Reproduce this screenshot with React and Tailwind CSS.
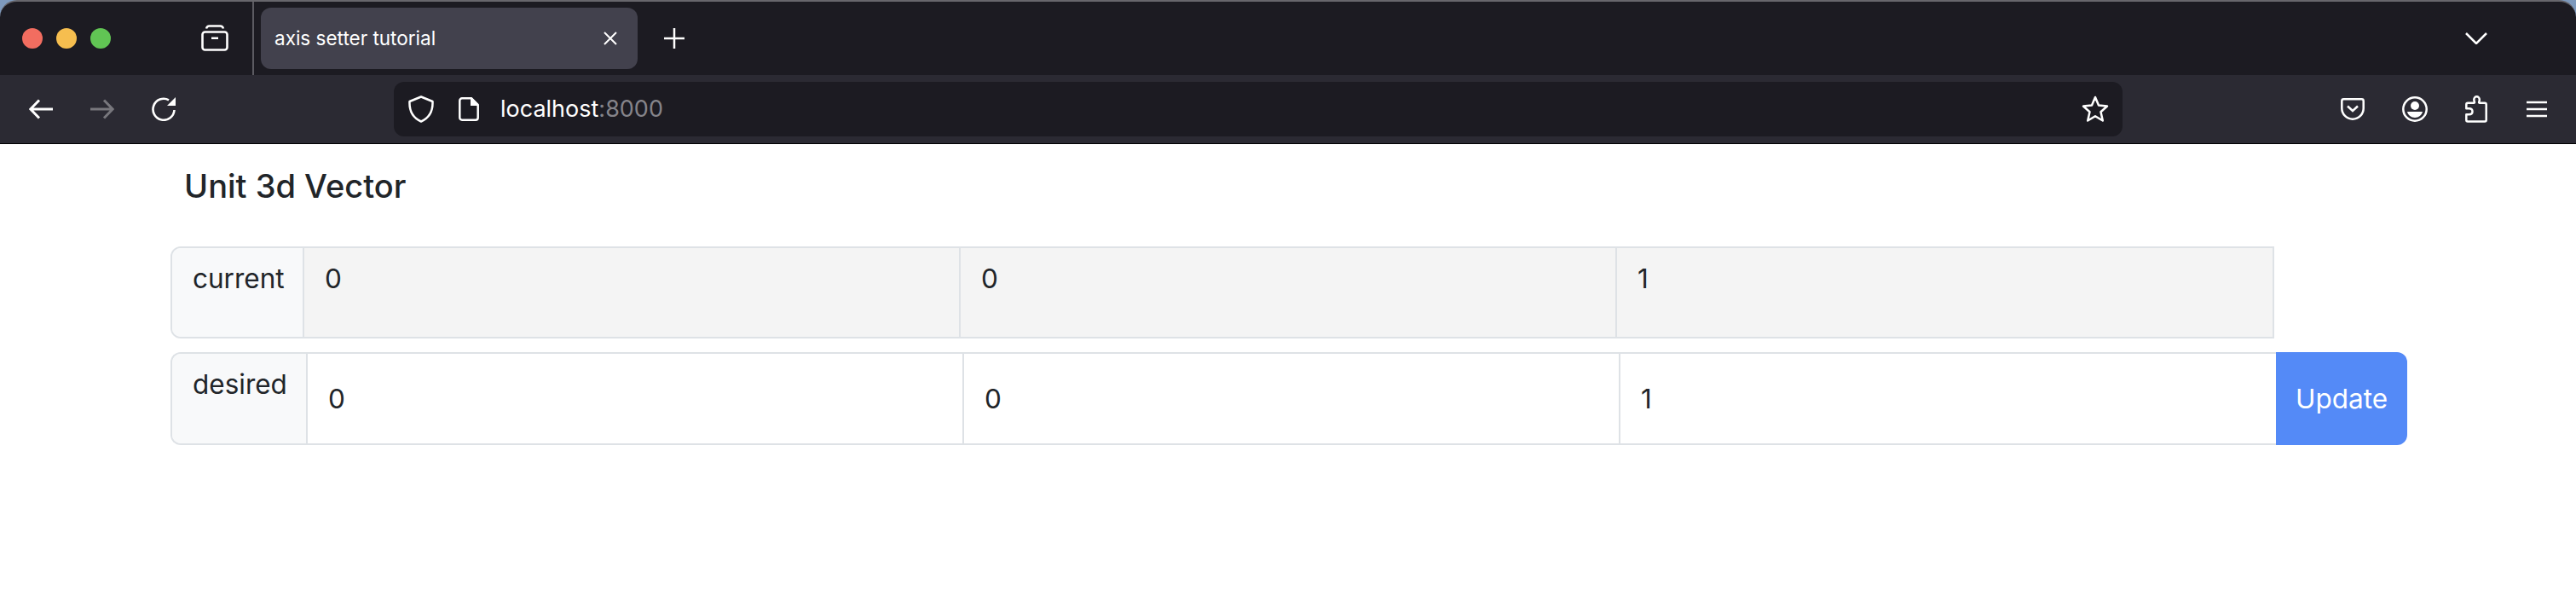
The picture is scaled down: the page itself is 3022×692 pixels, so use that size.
function ViewIcon() {
  return (
    <svg width="32" height="32" viewBox="0 0 32 32" fill="none" stroke="white" strokeWidth="2.6" className="ml-[106px] shrink-0">
      <rect x="1.5" y="8.5" width="29" height="21" rx="3" />
      <path d="M6 4.5c.6-2 1.6-3 3.5-3h13c1.900 0 2.900 1 3.500 3" />
      <rect x="12" y="14.500" width="8" height="2.500" fill="white" stroke="none" />
    </svg>
  )
}

function Back({ dim }) {
  return (
    <svg width="28" height="24" viewBox="0 0 28 24" fill="none" stroke={dim ? '#78777d' : 'white'} strokeWidth="3" className={dim ? 'ml-[44px] shrink-0 rotate-180' : 'shrink-0'}>
      <path d="M28 12H2M12 1.500 1.800 12 12 22.500" />
    </svg>
  )
}

function Reload() {
  return (
    <svg width="28" height="28" viewBox="0 0 28 28" fill="none" className="ml-[44px] shrink-0">
      <path d="M26.500 15A12.500 12.500 0 1 1 20 3.300" stroke="white" strokeWidth="2.600" />
      <path d="M28 0v10H18z" fill="white" />
    </svg>
  )
}

function Shield() {
  return (
    <svg width="30" height="32" viewBox="0 0 30 32" fill="none" stroke="white" strokeWidth="2.500" className="ml-[17px] shrink-0">
      <path d="M15 1.500 28.500 7c.5 11-3.500 19-13.500 23.500C5 26 1 18 1.500 7z" strokeLinejoin="round" />
    </svg>
  )
}

function FileIcon() {
  return (
    <svg width="24" height="28" viewBox="0 0 24 28" fill="none" className="ml-[29px] shrink-0">
      <path d="M4 1.300h11L22.700 9v15c0 1.500-1.200 2.700-2.700 2.700H4A2.700 2.700 0 0 1 1.300 24V4A2.700 2.700 0 0 1 4 1.300z" stroke="white" strokeWidth="2.500" />
      <path d="M14 1h2l7 7v2h-9z" fill="white" />
    </svg>
  )
}

function Star() {
  return (
    <svg width="32" height="32" viewBox="0 0 32 32" fill="none" stroke="white" strokeWidth="2.500" strokeLinejoin="round" className="ml-auto mr-[16px] shrink-0">
      <path d="M16 2l4 9.500 10 1-7.500 6.800 2.300 10.200-8.800-5.300-8.800 5.300 2.300-10.200L2 12.500l10-1z" />
    </svg>
  )
}

function Pocket() {
  return (
    <svg width="28" height="26" viewBox="0 0 28 26" fill="none" stroke="white" strokeWidth="2.500" className="ml-[256px] shrink-0">
      <path d="M3.500 1.300h21c1.300 0 2.200.9 2.200 2.200V12c0 7-5.600 12.700-12.700 12.700S1.300 19 1.300 12V3.500c0-1.300.9-2.200 2.200-2.200z" />
      <path d="M8 9.500l6 5.500 6-5.500" />
    </svg>
  )
}

function Profile() {
  return (
    <svg width="30" height="30" viewBox="0 0 30 30" fill="none" className="ml-[44px] shrink-0">
      <circle cx="15" cy="15" r="13.700" stroke="white" strokeWidth="2.500" />
      <circle cx="15" cy="11" r="5" fill="white" />
      <path d="M6 18h18c-1 4-4.500 7-9 7s-8-3-9-7z" fill="white" />
    </svg>
  )
}

function Puzzle() {
  return (
    <svg width="26" height="32" viewBox="0 0 26 32" fill="none" stroke="white" strokeWidth="2.500" strokeLinejoin="round" className="ml-[44px] shrink-0">
      <path d="M3 30.500h20c1 0 1.700-.7 1.700-1.700V10.500c0-1-.7-1.700-1.700-1.700h-6c-.8 0-1-.6-.8-1.200.6-1.200.6-2 .6-2.800 0-2-1.600-3.500-3.300-3.500S10.300 2.800 10.300 4.800c0 .8.200 1.600.6 2.800.2.600 0 1.200-.8 1.200H3c-1 0-1.700.7-1.700 1.700v4.700h3.200c2.300 0 4 1.400 4 3.500s-1.700 3.500-4 3.500H1.300v6.600c0 1 .7 1.700 1.700 1.700z" />
    </svg>
  )
}

function Menu() {
  return (
    <svg width="24" height="20" viewBox="0 0 24 20" fill="none" stroke="white" strokeWidth="2.500" className="ml-[46px] shrink-0">
      <path d="M0 2h24M0 10h24M0 18h24" />
    </svg>
  )
}

function BrowserChrome() {
  return (
    <div className="bg-[#7d99bd]">
      <div className="flex h-[88px] items-center overflow-hidden rounded-t-[20px] border-t-2 border-[#67666c] bg-[#1c1b22]">
        <div className="ml-[26px] h-6 w-6 shrink-0 rounded-full bg-[#f26d60]" />
        <div className="ml-4 h-6 w-6 shrink-0 rounded-full bg-[#f6be4f]" />
        <div className="ml-4 h-6 w-6 shrink-0 rounded-full bg-[#61c554]" />
        <ViewIcon />
        <div className="ml-[28px] h-full w-[2px] shrink-0 bg-[#5c5b62]" />
        <div className="ml-[8px] flex h-[72px] w-[442px] shrink-0 items-center rounded-xl bg-[#42414d] pl-4 pr-[24px] text-[22.500px] text-white">
          axis setter tutorial
          <svg width="16" height="16" viewBox="0 0 16 16" fill="none" stroke="white" strokeWidth="2" className="ml-auto">
            <path d="M1 1l14 14M15 1 1 15" />
          </svg>
        </div>
        <svg width="24" height="24" viewBox="0 0 24 24" fill="none" stroke="white" strokeWidth="2.500" className="ml-[31px] shrink-0">
          <path d="M0 12h24M12 0v24" />
        </svg>
        <svg width="26" height="14" viewBox="0 0 26 14" fill="none" stroke="white" strokeWidth="2.500" className="ml-auto mr-[104px] shrink-0">
          <path d="M1 1l12 12L25 1" />
        </svg>
      </div>
      <div className="flex h-[81px] items-center border-b border-black bg-[#2b2a33] pl-[34px]">
        <Back />
        <Back dim />
        <Reload />
        <div className="ml-[256px] flex h-16 w-[2028px] shrink-0 items-center rounded-xl bg-[#1c1b22]">
          <Shield />
          <FileIcon />
          <span className="ml-[25px] text-[27px] text-white">
            localhost<span className="text-[#85848a]">:8000</span>
          </span>
          <Star />
        </div>
        <Pocket />
        <Profile />
        <Puzzle />
        <Menu />
      </div>
    </div>
  )
}

const values = ['0', '0', '1']

export default function App() {
  return (
    <div className="min-h-[692px] bg-white font-['Inter',sans-serif] text-[#212529]">
      <BrowserChrome />
      <div className="pl-[200px]">
        <h5 className="pl-[16px] pt-[25px] text-[38px] leading-[48px] font-medium">Unit 3d Vector</h5>

        <div className="mt-[47px] flex h-[108px] w-[2468px] rounded-l-xl border-2 border-[#dee2e6] text-[31.500px]">
          <div className="w-[155px] shrink-0 rounded-l-[10px] border-r-2 border-[#dee2e6] bg-[#f8f9fa] px-6 py-3 leading-[48px]">current</div>
          {values.map((v, i) => (
            <div key={i} className={i < 2 ? 'w-[770px] shrink-0 border-r-2 border-[#dee2e6] bg-[#f4f4f4] px-6 py-3 leading-[48px]' : 'flex-1 bg-[#f4f4f4] px-6 py-3 leading-[48px]'}>{v}</div>
          ))}
        </div>

        <div className="mt-4 flex h-[109px] w-[2624px] text-[31.500px]">
          <div className="flex flex-1 rounded-l-xl border-y-2 border-l-2 border-[#dee2e6]">
            <div className="w-[159px] shrink-0 rounded-l-[10px] border-r-2 border-[#dee2e6] bg-[#f8f9fa] px-6 py-3 leading-[48px]">desired</div>
            {values.map((v, i) => (
              <div key={i} className={i < 2 ? 'flex w-[770px] shrink-0 items-center border-r-2 border-[#dee2e6] px-6' : 'flex flex-1 items-center px-6'}>{v}</div>
            ))}
          </div>
          <button className="flex w-[154px] shrink-0 items-center justify-center rounded-r-xl bg-[#548af7] text-white">Update</button>
        </div>
      </div>
    </div>
  )
}
